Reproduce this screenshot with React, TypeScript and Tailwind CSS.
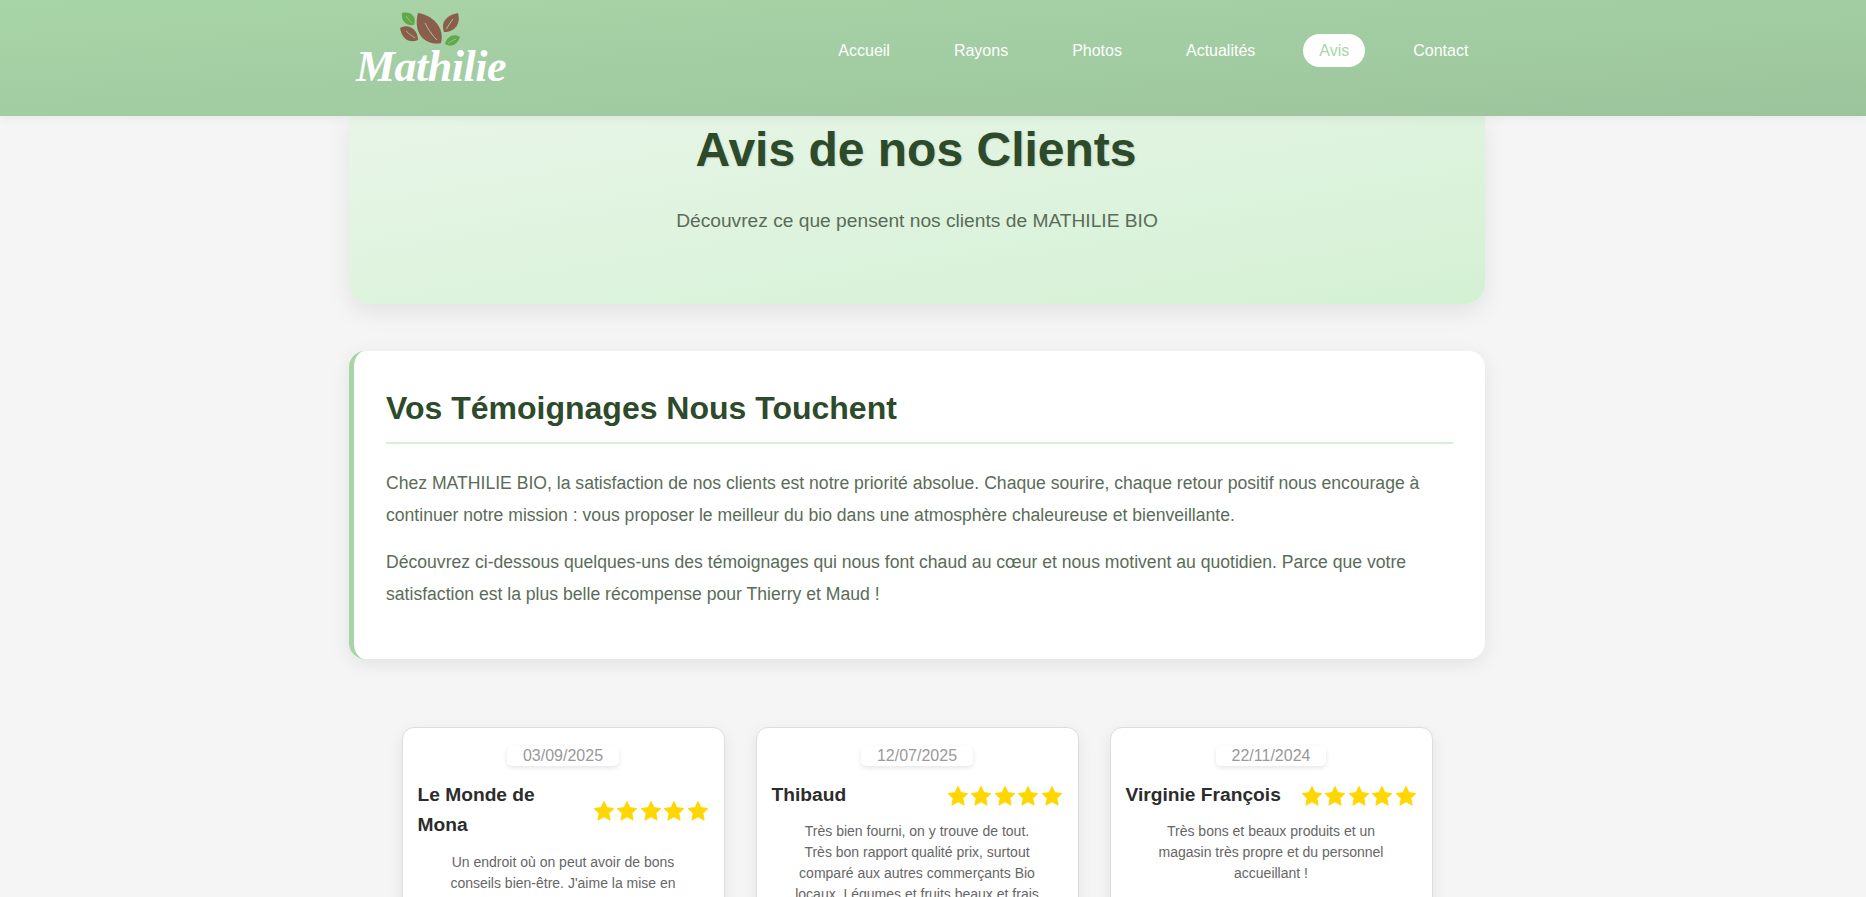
const reviews = [
  {
    date: "03/09/2025",
    name: "Le Monde de Mona",
    lines: ["Un endroit où on peut avoir de bons", "conseils bien-être. J'aime la mise en"],
  },
  {
    date: "12/07/2025",
    name: "Thibaud",
    lines: ["Très bien fourni, on y trouve de tout.", "Très bon rapport qualité prix, surtout", "comparé aux autres commerçants Bio", "locaux. Légumes et fruits beaux et frais"],
  },
  {
    date: "22/11/2024",
    name: "Virginie François",
    lines: ["Très bons et beaux produits et un", "magasin très propre et du personnel", "accueillant !"],
  },
];

const navItems = ["Accueil", "Rayons", "Photos", "Actualités", "Avis", "Contact"];

function Leaves() {
  return (
    <svg viewBox="0 0 62 36" className="w-[62px] h-[36px]">
      <path d="M18 1 C32 3 45 15 41 31 C28 34 12 24 18 1 Z" fill="#8b5e4b" />
      <path d="M25 11 C28 17 32 23 37 28" stroke="#a3d0a0" strokeWidth="0.9" fill="none" />
      <path d="M58 1 C61 12 55 20 44 20 C40 9 48 3 58 1 Z" fill="#8b5e4b" />
      <path d="M53 7 C50 11 48 14 46.500 17" stroke="#a3d0a0" strokeWidth="0.9" fill="none" />
      <path d="M0 16 C8 11 18 17 18 28 C8 32 2 26 0 16 Z" fill="#8b5e4b" />
      <path d="M6 19 C9 22 12 24 15 26" stroke="#a3d0a0" strokeWidth="0.800" fill="none" />
      <path d="M2 1 C11 -1 17 5 14 13 C6 14 1 9 2 1 Z" fill="#5fa948" />
      <path d="M6 4 C8 7 10 9 12 11" stroke="#a3d0a0" strokeWidth="0.700" fill="none" />
      <path d="M60 25 C57 34 50 35 45 32 C47 24 54 21 60 25 Z" fill="#5fa948" />
      <path d="M56 27 C53 28 50 30 48 31.500" stroke="#a3d0a0" strokeWidth="0.700" fill="none" />
    </svg>
  );
}

function Logo() {
  return (
    <div className="flex flex-col items-center w-[150px] ml-[7px] pt-[12px]">
      <Leaves />
      <div className="font-['Liberation_Serif',serif] italic font-bold text-white text-[44px] leading-[44px] tracking-[-0.5px] -mt-[3px]">
        Mathilie
      </div>
    </div>
  );
}

function Review({ date, name, lines }: { date: string; name: string; lines: string[] }) {
  return (
    <div className="w-[323px] min-h-[300px] bg-white border border-[#dddddd] rounded-[12px] shadow-[0_5px_15px_rgba(0,0,0,0.08)] pt-[18px] px-[15px] pb-4">
      <div className="flex justify-center">
        <div className="bg-white rounded-[5px] shadow-[0_2px_5px_rgba(0,0,0,0.1)] px-4 h-[20px] leading-[20px] text-[16px] text-[#999999]">
          {date}
        </div>
      </div>
      <div className="flex items-center justify-between gap-3 mt-[14px]">
        <div className="text-[19.200px] leading-[30.700px] font-bold text-[#2c2c2c]">{name}</div>
        <div className="shrink-0 flex gap-[1.500px] text-[#ffd700] pt-[2px]">
          {[0, 1, 2, 3, 4].map((i) => (
            <svg key={i} viewBox="0 0 24 24" className="w-[22px] h-[22px]">
              <path
                d="M12 1.500 L15.200 8.300 L22.800 9.300 L17.300 14.500 L18.700 22 L12 18.400 L5.300 22 L6.700 14.500 L1.200 9.300 L8.800 8.300 Z"
                fill="currentColor"
                stroke="currentColor"
                strokeWidth="1"
                strokeLinejoin="round"
              />
            </svg>
          ))}
        </div>
      </div>
      <div className="mt-[11px] text-center text-[14px] leading-[21px] text-[#666666]">
        {lines.map((l) => (
          <div key={l} className="whitespace-nowrap">{l}</div>
        ))}
      </div>
    </div>
  );
}

export default function App() {
  return (
    <div className="h-[897px] overflow-hidden bg-[#f5f5f5] font-['Liberation_Sans',Arial,sans-serif]">
      <header className="relative z-10 h-[116px] bg-gradient-to-br from-[#a8d5a8] to-[#9cc49c] shadow-[0_2px_10px_rgba(0,0,0,0.06)]">
        <div className="w-[1136px] ml-[349px] h-full flex items-start justify-between">
          <Logo />
          <nav className="flex items-center gap-8 h-[101px] mr-[0.600px]">
            {navItems.map((n) => (
              <div
                key={n}
                className={
                  n === "Avis"
                    ? "px-4 py-2 h-[33px] leading-[17px] text-[16px] rounded-[20px] bg-white text-[#a8d5a8]"
                    : "px-4 py-2 h-[33px] leading-[17px] text-[16px] rounded-[20px] text-white"
                }
              >
                {n}
              </div>
            ))}
          </nav>
        </div>
      </header>

      <main className="w-[1136px] ml-[349px]">
        <section className="rounded-b-[20px] bg-gradient-to-br from-[#e8f5e8] to-[#d4f1d4] shadow-[0_8px_25px_rgba(0,0,0,0.08)] text-center pb-[69px]">
          <h1 className="text-[48px] leading-[68px] font-bold pr-[2px] text-[#2d4a2b] [text-shadow:1px_1px_2px_rgba(0,0,0,0.1)]">
            Avis de nos Clients
          </h1>
          <p className="mt-[22px] text-[19.200px] leading-[29px] text-[#5a6c57]">
            Découvrez ce que pensent nos clients de MATHILIE BIO
          </p>
        </section>

        <section className="mt-[47px] bg-white rounded-[16px] border-l-[5px] border-[#a8d5a8] shadow-[0_5px_20px_rgba(0,0,0,0.08)] px-8 pt-8 pb-[34px]">
          <h2 className="text-[32px] leading-[51px] font-bold text-[#2d4a2b] pb-2 border-b-2 border-[#d4f1d4] mb-6">
            Vos Témoignages Nous Touchent
          </h2>
          <p className="text-[17.600px] leading-[31.680px] text-[#5a6c57] mb-[16px]">
            Chez MATHILIE BIO, la satisfaction de nos clients est notre priorité absolue. Chaque sourire, chaque retour positif nous encourage à continuer notre mission : vous proposer le meilleur du bio dans une atmosphère chaleureuse et bienveillante.
          </p>
          <p className="text-[17.600px] leading-[31.680px] text-[#5a6c57] mb-[14px]">
            Découvrez ci-dessous quelques-uns des témoignages qui nous font chaud au cœur et nous motivent au quotidien. Parce que votre satisfaction est la plus belle récompense pour Thierry et Maud !
          </p>
        </section>

        <section className="mt-[68px] flex justify-center gap-[31px]">
          {reviews.map((r) => (
            <Review key={r.name} {...r} />
          ))}
        </section>
      </main>
    </div>
  );
}
